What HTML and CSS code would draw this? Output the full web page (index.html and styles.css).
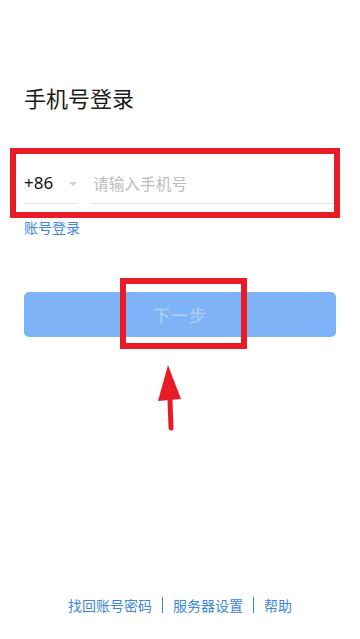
FILE: index.html
```html
<!DOCTYPE html>
<html lang="zh-CN">
<head>
<meta charset="utf-8">
<meta name="viewport" content="width=device-width, initial-scale=1">
<title>手机号登录</title>
<link rel="stylesheet" href="styles.css">
</head>
<body>
<main class="page">
  <h1 class="title">手机号登录</h1>
  <div class="phone-row">
    <div class="country">
      <span class="code">+86</span>
      <span class="caret"></span>
    </div>
    <div class="phone">
      <input class="phone-input" type="tel" placeholder="请输入手机号">
    </div>
  </div>
  <a class="account-link" href="#">账号登录</a>
  <button class="next-btn" type="button">下一步</button>
  <footer class="footer">
    <a href="#">找回账号密码</a>
    <span class="sep"></span>
    <a href="#">服务器设置</a>
    <span class="sep"></span>
    <a href="#">帮助</a>
  </footer>
</main>

<div class="mark mark-input"></div>
<div class="mark mark-btn"></div>
<svg class="arrow" width="40" height="80" viewBox="150 355 40 80">
  <polygon points="168,365 158,401 181,399" fill="#e81c27"/>
  <line x1="170" y1="400" x2="171" y2="428" stroke="#e81c27" stroke-width="5" stroke-linecap="round"/>
</svg>
</body>
</html>
```

FILE: styles.css
```css
* { box-sizing: border-box; }
html, body { margin: 0; padding: 0; background: #ffffff; }
body {
  font-family: "Noto Sans CJK SC", "Noto Sans", sans-serif;
  color: #222;
}
.page {
  min-height: 639px;
  display: flex;
  flex-direction: column;
  padding: 82px 24px 24px;
}
.title {
  margin: 0;
  font-size: 22px;
  line-height: 30px;
  font-weight: 400;
  color: #1a1a1a;
}
.phone-row {
  display: flex;
  gap: 13px;
  margin-top: 51px;
  height: 41px;
}
.country {
  width: 54px;
  display: flex;
  align-items: center;
  justify-content: space-between;
  border-bottom: 1px solid #e6e6e6;
  padding-right: 1px;
}
.code {
  font-family: "Noto Sans", sans-serif;
  font-size: 17px;
  color: #111;
  line-height: 20px;
}
.caret {
  width: 0; height: 0;
  border-left: 4.5px solid transparent;
  border-right: 4.5px solid transparent;
  border-top: 4px solid #cfcfcf;
  margin-top: 2px;
}
.phone {
  flex: 1;
  display: flex;
  align-items: center;
  border-bottom: 1px solid #e6e6e6;
}
.phone-input {
  border: 0;
  outline: 0;
  padding: 0 0 0 2px;
  width: 100%;
  background: transparent;
  font-family: "Noto Sans CJK SC", sans-serif;
  font-size: 15.7px;
  color: #222;
}
.phone-input::placeholder { color: #bdbdbd; }
.account-link {
  align-self: flex-start;
  margin-top: 13px;
  font-size: 14px;
  line-height: 20px;
  color: #3a86e0;
  text-decoration: none;
}
.next-btn {
  margin-top: 55px;
  height: 45px;
  border: 0;
  border-radius: 5px;
  background: #7eb3f7;
  color: #b3d1fa;
  font-family: "Noto Sans CJK SC", sans-serif;
  font-size: 17px;
  letter-spacing: 1px;
  padding: 0;
}
.footer {
  margin-top: auto;
  display: flex;
  justify-content: center;
  align-items: center;
  gap: 10px;
  font-size: 14px;
  line-height: 20px;
}
.footer a { color: #3a86e0; text-decoration: none; }
.sep {
  width: 1px;
  height: 16px;
  background: #3a86e0;
}
.mark {
  position: absolute;
  border: 6px solid #e81c27;
  pointer-events: none;
}
.mark-input { left: 10px; top: 148px; width: 330px; height: 70px; }
.mark-btn { left: 120px; top: 278px; width: 127px; height: 71px; }
.arrow { position: absolute; left: 150px; top: 355px; }
```
